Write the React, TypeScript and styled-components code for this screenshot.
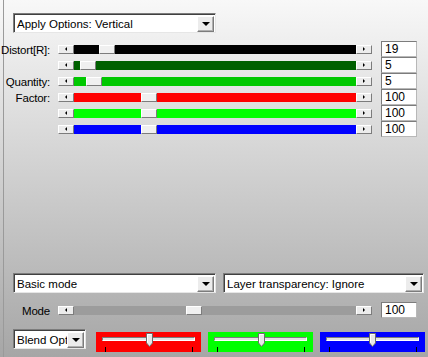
import React from "react";
import styled, { createGlobalStyle } from "styled-components";

const GlobalStyle = createGlobalStyle`
  html, body {
    margin: 0;
    padding: 0;
  }
  body {
    font-family: "Liberation Sans", Arial, sans-serif;
    font-size: 11px;
    color: #000;
  }
`;

const Window = styled.div`
  width: 428px;
  height: 357px;
  box-sizing: border-box;
  padding-left: 3px;
  display: flex;
  background: linear-gradient(#f8f8f8, #a6a6a6);
  overflow: hidden;
`;

const Panel = styled.div`
  flex: 1;
  display: flex;
  flex-direction: column;
  border-left: 1px solid #9a9a9a;
  padding: 13px 0 5px 0;
`;

const Select = styled.div<{ $w: number }>`
  width: ${(p) => p.$w}px;
  height: 20px;
  flex: none;
  box-sizing: border-box;
  display: flex;
  align-items: center;
  background: #fff;
  border: 1px solid;
  border-color: #7c7c7c #e6e6e6 #e6e6e6 #7c7c7c;
  box-shadow: inset 1px 1px 0 #404040;
  padding: 1px 1px 0 3px;
  overflow: hidden;
`;

const SelectText = styled.span`
  flex: 1;
  white-space: nowrap;
  overflow: hidden;
  line-height: 16px;
  font-size: 11.5px;
`;

const SelectButton = styled.span`
  width: 17px;
  height: 16px;
  flex: none;
  box-sizing: border-box;
  display: flex;
  align-items: center;
  justify-content: center;
  background: #ececec;
  border: 1px solid;
  border-color: #ffffff #7c7c7c #7c7c7c #ffffff;
  box-shadow: inset -1px -1px 0 #b0b0b0;

  &::after {
    content: "";
    border-left: 4px solid transparent;
    border-right: 4px solid transparent;
    border-top: 4px solid #000;
    margin-top: 1px;
  }
`;

const TopSelect = styled.div`
  margin: 0 0 8px 9px;
`;

const Rows = styled.div`
  display: flex;
  flex-direction: column;
`;

const Row = styled.div`
  height: 16px;
  display: flex;
  align-items: center;
`;

const Label = styled.span`
  width: 46px;
  margin-right: 8px;
  display: flex;
  justify-content: flex-end;
  white-space: nowrap;
  line-height: 16px;
  padding-top: 2px;
  font-size: 11.5px;
  letter-spacing: -0.2px;
`;

const Slider = styled.div`
  width: 314px;
  height: 9px;
  display: flex;
`;

const ArrowButton = styled.span<{ $dir: "left" | "right" }>`
  width: 16px;
  height: 9px;
  flex: none;
  box-sizing: border-box;
  display: flex;
  align-items: center;
  justify-content: center;
  background: #ececec;
  border: 1px solid;
  border-color: #ffffff #7c7c7c #7c7c7c #ffffff;

  &::after {
    content: "";
    border-top: 2px solid transparent;
    border-bottom: 2px solid transparent;
    ${(p) =>
      p.$dir === "left"
        ? "border-right: 2px solid #000;"
        : "border-left: 2px solid #000;"}
  }
`;

const Track = styled.div<{ $color: string }>`
  flex: 1;
  position: relative;
  background: ${(p) => p.$color};
`;

const Thumb = styled.span`
  position: absolute;
  top: 0;
  width: 16px;
  height: 9px;
  box-sizing: border-box;
  background: #f0f0f0;
  border: 1px solid;
  border-color: #ffffff #7c7c7c #7c7c7c #ffffff;
`;

const ValueBox = styled.span`
  width: 36px;
  height: 16px;
  margin-left: 9px;
  box-sizing: border-box;
  background: #fff;
  border: 1px solid;
  border-color: #7c7c7c #b8b8b8 #b8b8b8 #7c7c7c;
  padding-left: 3px;
  line-height: 15px;
  font-size: 12px;
`;

const Bottom = styled.div`
  margin-top: auto;
  display: flex;
  flex-direction: column;
`;

const SelectRow = styled.div`
  display: flex;
  gap: 7px;
  margin-left: 9px;
`;

const ModeRow = styled(Row)`
  margin-top: 9px;
`;

const BlendRow = styled.div`
  display: flex;
  align-items: flex-start;
  margin: 11px 0 0 9px;
  height: 23px;
`;

const ColorPanels = styled.div`
  display: flex;
  gap: 7px;
  margin: 3px 0 0 10px;
`;

const ColorPanel = styled.div<{ $color: string }>`
  width: 105px;
  height: 20px;
  position: relative;
  background: ${(p) => p.$color};
`;

const Groove = styled.span`
  position: absolute;
  left: 6px;
  top: 5px;
  width: 93px;
  height: 4px;
  box-sizing: border-box;
  background: #e4e4e4;
  border: 1px solid;
  border-color: #7c7c7c #ffffff #ffffff #7c7c7c;
`;

const Tick = styled.span`
  position: absolute;
  top: 15px;
  width: 1px;
  height: 5px;
  background: #000;
`;

const PointerThumb = styled.svg`
  position: absolute;
  top: 1px;
  width: 7px;
  height: 14px;
`;

const rows = [
  { label: "Distort[R]:", color: "#000000", thumb: 25, value: "19" },
  { label: "", color: "#006000", thumb: 6, value: "5" },
  { label: "Quantity:", color: "#00c800", thumb: 12, value: "5" },
  { label: "Factor:", color: "#ff0000", thumb: 67, value: "100" },
  { label: "", color: "#00ff00", thumb: 67, value: "100" },
  { label: "", color: "#0000ff", thumb: 67, value: "100" },
];

const blends = [
  { color: "#ff0000", thumb: 50 },
  { color: "#00ff00", thumb: 50 },
  { color: "#0000ff", thumb: 49 },
];

const Dropdown: React.FC<{ width: number; text: string }> = ({ width, text }) => (
  <Select $w={width}>
    <SelectText>{text}</SelectText>
    <SelectButton />
  </Select>
);

const HSlider: React.FC<{ color: string; thumb: number }> = ({ color, thumb }) => (
  <Slider>
    <ArrowButton $dir="left" />
    <Track $color={color}>
      <Thumb style={{ left: thumb }} />
    </Track>
    <ArrowButton $dir="right" />
  </Slider>
);

const App: React.FC = () => {
  return (
    <>
      <GlobalStyle />
      <Window>
        <Panel>
          <TopSelect>
            <Dropdown width={203} text="Apply Options: Vertical" />
          </TopSelect>
          <Rows>
            {rows.map((r, i) => (
              <Row key={i}>
                <Label>{r.label}</Label>
                <HSlider color={r.color} thumb={r.thumb} />
                <ValueBox>{r.value}</ValueBox>
              </Row>
            ))}
          </Rows>
          <Bottom>
            <SelectRow>
              <Dropdown width={203} text="Basic mode" />
              <Dropdown width={201} text="Layer transparency: Ignore" />
            </SelectRow>
            <ModeRow>
              <Label>Mode</Label>
              <HSlider color="#9c9c9c" thumb={112} />
              <ValueBox>100</ValueBox>
            </ModeRow>
            <BlendRow>
              <Dropdown width={73} text="Blend Options" />
              <ColorPanels>
                {blends.map((b, i) => (
                  <ColorPanel key={i} $color={b.color}>
                    <Groove />
                    <Tick style={{ left: 9 }} />
                    <Tick style={{ left: 96 }} />
                    <PointerThumb viewBox="0 0 7 14" style={{ left: b.thumb }}>
                      <path d="M0.5 0.5H6.5V10L3.5 13.5L0.5 10Z" fill="#e8e8e8" stroke="#6c6c6c" />
                      <path d="M1.5 1.5V9.5M1.5 1.5H5.5" stroke="#fff" />
                    </PointerThumb>
                  </ColorPanel>
                ))}
              </ColorPanels>
            </BlendRow>
          </Bottom>
        </Panel>
      </Window>
    </>
  );
};

export default App;
